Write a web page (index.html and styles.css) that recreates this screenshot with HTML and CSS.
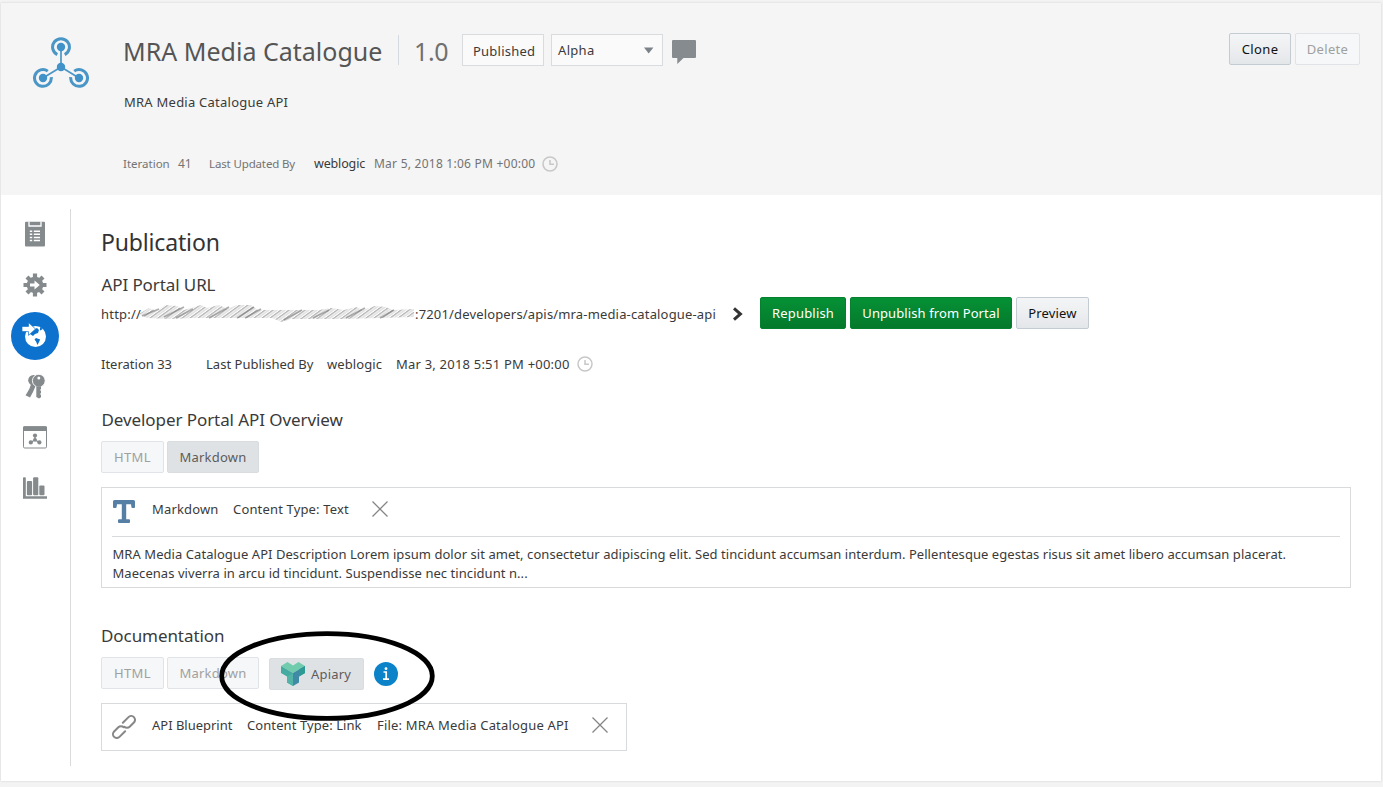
FILE: index.html
```html
<!DOCTYPE html>
<html lang="en">
<head>
<meta charset="utf-8">
<title>MRA Media Catalogue</title>
<link rel="stylesheet" href="styles.css">
</head>
<body>
<div class="page">
  <header class="head">
    <svg class="logo" width="56" height="52" viewBox="0 0 56 52" fill="none" stroke="#4a96c6">
      <path d="M28 10V30L10 41M28 30L46 41" stroke-width="1.7"/>
      <path d="M24.3 17.6A8.4 8.4 0 1 1 31.7 17.6M14.8 34.1A8.4 8.4 0 1 0 18.3 40.1M41.2 34.1A8.4 8.4 0 1 1 37.7 40.1" stroke-width="3"/>
      <g fill="#4192c9" stroke="none"><circle cx="28" cy="10" r="4.2"/><circle cx="28" cy="30" r="4.2"/><circle cx="10" cy="41" r="4.2"/><circle cx="46" cy="41" r="4.2"/></g>
    </svg>
    <div class="head-info">
      <div class="title-row">
        <h1 class="title">MRA Media Catalogue</h1>
        <span class="version">1.0</span>
        <span class="state">Published</span>
        <span class="select">Alpha<svg width="10" height="7" viewBox="0 0 10 7"><path d="M0 0.5H9.4L4.7 6.5Z" fill="#7c8388"/></svg></span>
        <svg class="comment" width="25" height="25" viewBox="0 0 25 25"><path d="M1 0H23Q24 0 24 1V17Q24 18 23 18H11.5L5.3 24V18H1Q0 18 0 17V1Q0 0 1 0Z" fill="#858b8f"/></svg>
      </div>
      <p class="desc">MRA Media Catalogue API</p>
      <div class="meta">
        <span class="m-iter">Iteration</span><span class="m-num">41</span><span class="m-by">Last Updated By</span><span class="m-user">weblogic</span><span class="m-date">Mar 5, 2018 1:06 PM +00:00</span>
        <svg width="16" height="16" viewBox="0 0 16 16" fill="none" stroke="#c8c8c8"><circle cx="8" cy="8" r="7" stroke-width="1.6"/><path d="M8 4V8.2H12" stroke-width="1.6"/></svg>
      </div>
    </div>
    <div class="actions"><button class="btn clone">Clone</button><button class="btn off delete">Delete</button></div>
  </header>

  <div class="body">
    <nav class="side">
      <a><svg width="20" height="26" viewBox="2 0 20 26"><path d="M2 1.5Q2 .8 3 .8H21Q22 .8 22 1.5V24.5Q22 25.5 21 25.5H3Q2 25.5 2 24.5Z" fill="#858a8d"/><path d="M6 .5V5H18V.5" fill="none" stroke="#fff" stroke-width="1.3"/><path d="M6.8 10.2H9.2M10.8 10.2H17M6.8 13.3H9.2M10.8 13.3H17M6.8 16.4H9.2M10.8 16.4H17M6.8 19.5H9.2M10.8 19.5H17" stroke="#fff" stroke-width="1.5"/></svg></a>
      <a><svg width="24" height="24" viewBox="0 0 24 24"><circle cx="12" cy="12" r="8.3" fill="#858a8d"/><path d="M12 0.5V23.5M0.5 12H23.5M4 4L20 20M20 4L4 20" stroke="#858a8d" stroke-width="4.2"/><path d="M7 10.4H11.5V7.6L16.8 12L11.5 16.4V13.6H7Z" fill="#fff"/></svg></a>
      <a class="current"><svg width="48" height="48" viewBox="0 0 48 48"><circle cx="24" cy="24" r="24" fill="#0d72ce"/><circle cx="24.5" cy="24.5" r="10.5" fill="#fff"/><path d="M20 19L26 16L28 18L27 21L24 22L22 24L19 22ZM25 26L29.2 27.5L28 30L26.5 33L25 29.5L23.5 27.5ZM29 15L32 17L29 18.5Z" fill="#0d72ce"/><path d="M11 14.4H17.5V10.6L24.5 17L17.5 23.4V19.6H11Z" fill="#fff" stroke="#0d72ce" stroke-width="0.7"/></svg></a>
      <a><svg width="24" height="26" viewBox="0 0 24 26"><g fill="#858a8d"><circle cx="10.5" cy="7.2" r="5.3"/><path d="M8.5 10L13 12L10 19L7 24.5L2.5 22.2L4 20L5 18.2L6.5 15.5Z"/></g><circle cx="15.8" cy="7.7" r="6.4" fill="#858a8d" stroke="#fff" stroke-width="0.9"/><path d="M13.3 13.2H18V16L17 17L18 18V20L17 21L18 22V24.2L16 25.5L13.3 24Z" fill="#858a8d"/><circle cx="15.8" cy="5" r="1.5" fill="#fff"/></svg></a>
      <a><svg width="24" height="23" viewBox="0 0 24 23"><rect x="0.5" y="0.8" width="23" height="21.2" rx="1.2" fill="#fff" stroke="#858a8d"/><path d="M0 1.5Q0 0.3 1.2 0.3H22.8Q24 0.3 24 1.5V5H0Z" fill="#858a8d"/><path d="M12 10V14L7.5 16.6M12 14L16.5 16.6" fill="none" stroke="#858a8d" stroke-width="1.2"/><g fill="#858a8d"><circle cx="12" cy="9.6" r="2.1"/><circle cx="12" cy="13.8" r="1.9"/><circle cx="7.8" cy="16.4" r="2.1"/><circle cx="16.4" cy="16.4" r="2.1"/></g></svg></a>
      <a><svg width="24" height="22" viewBox="0 0 24 22"><path d="M0 0.6Q1.4-0.2 2.8 0.6V19.2H24V21.8H0Z" fill="#858a8d"/><g fill="#858a8d"><rect x="3.9" y="4" width="5.2" height="14.2" rx="1"/><rect x="10.1" y="0.3" width="5.2" height="17.9" rx="1"/><rect x="16.3" y="8.5" width="5.2" height="9.7" rx="1"/></g></svg></a>
    </nav>
    <main class="main">
      <h2 class="h-pub">Publication</h2>
      <h3 class="h-url">API Portal URL</h3>
      <div class="url-row">
        <span class="url-a">http://</span>
        <svg class="smudge" width="276" height="22" viewBox="0 0 276 22">
          <defs><pattern id="hatch" width="8" height="22" patternUnits="userSpaceOnUse" patternTransform="skewX(-54)"><path d="M1 0V22" stroke="#bbb" stroke-width="3"/><path d="M5 0V22" stroke="#e2e2e2" stroke-width="3"/></pattern><filter id="soft"><feGaussianBlur stdDeviation=".6"/></filter></defs>
          <g filter="url(#soft)">
          <path d="M0 12L10 6L18 9L26 3L38 4L45 8L62 3L68 6L80 3L88 7L98 3H112L119 8L180 8L192 6L205 8L217 5L224 8L236 4L247 5L254 8L275 7V15L240 16L203 17L152 17L143 20L133 16H108L82 16L54 16L31 17L8 16Z" fill="url(#hatch)"/>
          <path d="M3 14L20 7M25 15L45 5M37 16L54 7M70 16L90 5M98 16L115 5M106 16L122 7M145 18L163 8M174 16L190 8M207 16L226 6M241 16L255 8" stroke="#777" stroke-width="1.8" opacity=".6"/>
          </g>
        </svg>
        <span class="url-b">:7201/developers/apis/mra-media-catalogue-api</span>
        <svg class="chev" width="12" height="14" viewBox="0 0 12 14"><path d="M2 1.4L8.4 7L2 12.6" fill="none" stroke="#333" stroke-width="3"/></svg>
        <button class="btn green republish">Republish</button><button class="btn green unpublish">Unpublish from Portal</button><button class="btn preview">Preview</button>
      </div>
      <div class="pub-meta">
        <span class="p-iter">Iteration 33</span><span class="p-by">Last Published By</span><span class="p-user">weblogic</span><span class="p-date">Mar 3, 2018 5:51 PM +00:00</span>
        <svg width="16" height="16" viewBox="0 0 16 16" fill="none" stroke="#c8c8c8"><circle cx="8" cy="8" r="7" stroke-width="1.5"/><path d="M8 4V8.2H12" stroke-width="1.5"/></svg>
      </div>
      <h3 class="h-over">Developer Portal API Overview</h3>
      <div class="tabs"><button class="btn off html">HTML</button><button class="btn on md">Markdown</button></div>
      <section class="box text-box">
        <div class="box-head">
          <svg class="ticon" width="22" height="24" viewBox="0 0 22 24"><path d="M1.5 0H20.5Q22 0 22 1.5V7.2Q22 8 21 8H19.4Q18.5 8 18.4 7L18 4.2H13.2V19.2H16Q17 19.2 17 20.2V22Q17 23 16 23H6Q5 23 5 22V20.2Q5 19.2 6 19.2H8.8V4.2H4L3.6 7Q3.5 8 2.6 8H1Q0 8 0 7.2V1.5Q0 0 1.5 0Z" fill="#567fa5"/></svg>
          <span class="b-md">Markdown</span><span class="b-ct">Content Type: Text</span>
          <svg class="close" width="16" height="16" viewBox="0 0 16 16"><path d="M.5 .5L15.5 15.5M15.5 .5L.5 15.5" stroke="#858585" stroke-width="1.3"/></svg>
        </div>
        <p class="copy"><span class="line">MRA Media Catalogue API Description Lorem ipsum dolor sit amet, consectetur adipiscing elit. Sed tincidunt accumsan interdum. Pellentesque egestas risus sit amet libero accumsan placerat.</span> <span class="line">Maecenas viverra in arcu id tincidunt. Suspendisse nec tincidunt n...</span></p>
      </section>
      <h3 class="h-doc">Documentation</h3>
      <div class="tabs doc-tabs"><button class="btn off html">HTML</button><button class="btn off md">Markdown</button>
        <button class="btn on apiary"><svg width="24" height="24" viewBox="0 0 24 24"><path d="M0 4L6.5 0L12 3.5L17.5 0L24 4L12 11Z" fill="#70ccad"/><path d="M0 4L12 11V24L6 20.5V14.5L0 11Z" fill="#45aba1"/><path d="M24 4L12 11V24L18 20.5V14.5L24 11Z" fill="#3f8aa5"/><path d="M6 14.5L12 11V24L6 20.5Z" fill="#52b3a6"/><path d="M18 7.5L24 4V11L18 14.5Z" fill="#2c9b93"/></svg><span>Apiary</span></button>
        <svg class="info" width="24" height="24" viewBox="0 0 24 24"><circle cx="12" cy="12" r="12" fill="#0c83c8"/><circle cx="12" cy="6.7" r="1.4" fill="#fff"/><path d="M9.5 10H12.2V17M9 17.2H15" fill="none" stroke="#fff" stroke-width="1.7"/></svg>
      </div>
      <section class="box link-box">
        <svg class="chain" width="24" height="24" viewBox="0 0 24 24" fill="none" stroke="#878787" stroke-width="2" stroke-linecap="round"><g transform="rotate(-45 12 12)"><path d="M9.8 15.8H1.8A3.8 3.8 0 0 1 1.8 8.2H7.8A3.8 3.8 0 0 1 11.6 12"/><path d="M14.2 8.2H22.2A3.8 3.8 0 0 1 22.2 15.8H16.2A3.8 3.8 0 0 1 12.4 12"/></g></svg>
        <span class="l-api">API Blueprint</span><span class="l-ct">Content Type: Link</span><span class="l-file">File: MRA Media Catalogue API</span>
        <svg class="close" width="16" height="16" viewBox="0 0 16 16"><path d="M.5 .5L15.5 15.5M15.5 .5L.5 15.5" stroke="#858585" stroke-width="1.3"/></svg>
      </section>
      <svg class="mark" width="216" height="90" viewBox="0 0 216 90"><ellipse cx="108" cy="45" rx="105.3" ry="42.4" fill="none" stroke="#000" stroke-width="4.8"/></svg>
    </main>
  </div>
</div>
</body>
</html>
```
FILE: styles.css
```css
* { box-sizing: border-box; }
body {
  margin: 0;
  height: 787px;
  overflow: hidden;
  padding: 3px 2px 0 1px;
  background: #f3f3f3;
  color: #3a3a3a;
  font: 13px/20px "Noto Sans", "Open Sans", sans-serif;
}
h1, h2, h3, p { margin: 0; font-weight: 400; }
span, button, h1, h2, h3, p { white-space: nowrap; }
svg { display: block; flex: none; }
.page { height: 778px; background: #fff; box-shadow: 0 0 2px #ccc; }

.head { display: flex; height: 192px; background: #f5f5f5; padding-left: 32px; }
.logo { margin: 34px 34px 0 0; }
.head-info { flex: 1; }
.title-row { display: flex; align-items: center; height: 32px; margin-top: 31px; }
.title { width: 276px; height: 30px; line-height: 33px; font-size: 25px; color: #555; letter-spacing: .01px; border-right: 1px solid #d4dae0; }
.version { width: 63px; padding-left: 15px; padding-top: 2px; font-size: 25px; color: #707070; letter-spacing: -.4px; }
.state, .select { height: 32px; border: 1px solid #d9dcdf; background: #fafafa; line-height: 31px; }
.state { width: 82px; padding-left: 10px; padding-top: 1px; margin-right: 7px; letter-spacing: .22px; }
.select { width: 112px; padding: 0 8px 0 6px; display: flex; align-items: center; justify-content: space-between; letter-spacing: .32px; }
.comment { margin: 4px 0 0 9px; }
.desc { margin: 26px 0 0; letter-spacing: .24px; padding-left: 1px; }
.meta { display: flex; align-items: center; height: 20px; margin-top: 42px; font-size: 12px; color: #737373; }
.m-iter { width: 55px; font-size: 11.5px; }
.m-num { width: 31px; }
.m-by { width: 105px; font-size: 11.5px; letter-spacing: -.14px; }
.m-user { width: 60px; font-size: 12.5px; letter-spacing: -.15px; color: #3a3a3a; }
.m-date { width: 168px; letter-spacing: .24px; }
.actions { display: flex; gap: 4px; padding: 30px 21px 0 0; }

.btn { height: 32px; border: 1px solid #c4ccd3; border-radius: 2px; background: linear-gradient(#f4f5f7, #e4e7ea); color: #111; font: 13px/30px "Noto Sans", sans-serif; padding: 0; text-align: center; letter-spacing: .2px; }
.clone { width: 62px; letter-spacing: .38px; }
.delete { width: 65px; letter-spacing: .3px; }
.off { background: #f5f7f8; border-color: #e0e3e7; color: #a0a0a0; }
.on { background: #dfe2e5; border-color: #d9dde0; color: #5c5c5c; }
.green { border-color: #04802f; background: linear-gradient(#069136, #04792b); color: #fff; }

.body { display: flex; padding-top: 14px; }
.side { width: 70px; height: 557px; border-right: 1px solid #dadada; padding-right: 1px; display: flex; flex-direction: column; align-items: center; }
.side a { height: 50.7px; display: flex; align-items: center; }
.main { position: relative; flex: 1; padding: 16px 30px 0 30px; }
.h-pub { font-size: 23px; line-height: 34px; letter-spacing: -.16px; color: #333; }
.h-url { font-size: 17px; line-height: 24px; letter-spacing: -.1px; margin-top: 14px; padding-left: .5px; }
.url-row { display: flex; align-items: center; height: 32px; }
.url-a, .url-b { position: relative; top: .5px; }
.url-a { width: 38px; letter-spacing: .21px; }
.url-b { width: 301px; letter-spacing: .16px; }
.chev { margin: 2px 16px 0 16px; }
.republish { width: 86px; margin-right: 4px; }
.unpublish { width: 162px; margin-right: 4px; letter-spacing: .1px; }
.preview { width: 73px; letter-spacing: .15px; }
.pub-meta { display: flex; align-items: center; height: 20px; margin: 25px 0 0; }
.p-iter { width: 105px; }
.p-by { width: 121px; letter-spacing: .02px; }
.p-user { width: 69px; letter-spacing: .1px; }
.p-date { width: 181px; letter-spacing: .21px; }
.h-over { font-size: 17px; line-height: 24px; letter-spacing: -.08px; margin-top: 34px; padding-left: .5px; }
.tabs { display: flex; gap: 3px; height: 33px; margin-top: 9px; }
.html { width: 63px; letter-spacing: .4px; }
.md { width: 92px; letter-spacing: .2px; }
.box { border: 1px solid #d9dadb; background: #fff; }
.text-box { height: 101px; margin-top: 13px; padding: 0 10px; }
.box-head { display: flex; height: 49px; border-bottom: 1px solid #d9dadb; line-height: 43px; }
.ticon { margin: 12px 17px 0 1px; }
.b-md { width: 81px; letter-spacing: .15px; }
.b-ct { width: 139px; letter-spacing: .16px; }
.box-head .close { margin-top: 13px; }
.copy { display: flex; flex-direction: column; margin-top: 8px; line-height: 19px; letter-spacing: .055px; padding-left: .5px; }
.h-doc { font-size: 17px; line-height: 24px; letter-spacing: -.07px; margin-top: 36px; }
.apiary { width: 95px; margin: 1px 0 0 7px; display: flex; align-items: center; gap: 6px; padding-left: 11px; letter-spacing: .2px; }
.info { margin: 5px 0 0 7px; }
.link-box { display: flex; width: 526px; height: 48px; margin-top: 13px; line-height: 43px; padding-left: 10px; }
.chain { margin: 11px 16px 0 0; }
.l-api { width: 95px; letter-spacing: -.02px; }
.l-ct { width: 130px; letter-spacing: .08px; }
.l-file { width: 215px; letter-spacing: .18px; }
.link-box .close { margin-top: 13px; }
.mark { position: absolute; left: 148px; top: 422px; }
```
